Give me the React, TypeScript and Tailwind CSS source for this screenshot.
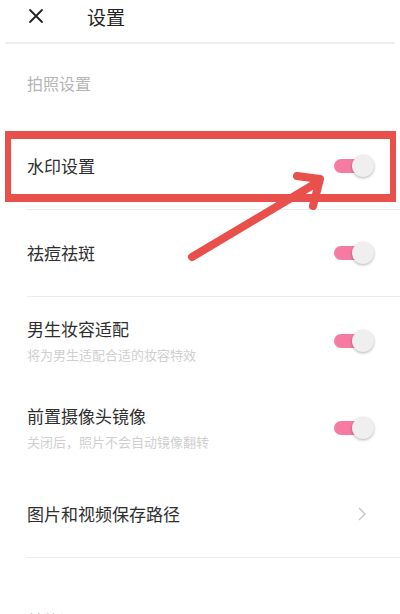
import React from "react";

const font = { fontFamily: '"Noto Sans CJK SC", "Noto Sans", sans-serif' };

function Toggle() {
  return (
    <div className="relative w-[40px] h-[24px] flex items-center">
      <div className="absolute left-0 w-[30px] h-[14px] rounded-full bg-[#f57ba2]" />
      <div className="absolute right-0 w-[22px] h-[22px] rounded-full bg-[#efefef] shadow-[0_1px_3px_rgba(0,0,0,0.3)]" />
    </div>
  );
}

function Row({ title, sub, right, border = true }: { title: string; sub?: string; right: React.ReactNode; border?: boolean }) {
  return (
    <div className={`ml-[27px] h-[87px] flex items-center justify-between pr-[26px] ${border ? "border-b border-[#ececec]" : ""}`}>
      <div className="flex flex-col">
        <div className="text-[17px] leading-[20px] text-[#2e2e2e]">{title}</div>
        {sub && <div className="mt-[9px] text-[13px] leading-[14px] text-[#cfcfcf]">{sub}</div>}
      </div>
      {right}
    </div>
  );
}

export default function App() {
  return (
    <div className="relative w-[400px] h-[614px] overflow-hidden bg-white" style={font}>
      <div className="h-[42px] flex items-center pb-[10px]">
        <svg className="ml-[28px]" width="16" height="16" viewBox="0 0 16 16">
          <path d="M2 2 L14 14 M14 2 L2 14" stroke="#222" strokeWidth="1.8" strokeLinecap="round" />
        </svg>
        <div className="ml-[43px] text-[19px] text-[#222] leading-none">设置</div>
      </div>
      <div className="mx-[5px] h-[2px] bg-[#eeeeee]" />
      <div className="h-[79px] flex items-center pl-[27px] pb-[2px]">
        <span className="text-[16px] text-[#b5b5b5]">拍照设置</span>
      </div>
      <Row title="水印设置" right={<Toggle />} />
      <Row title="祛痘祛斑" right={<Toggle />} />
      <Row title="男生妆容适配" sub="将为男生适配合适的妆容特效" right={<Toggle />} border={false} />
      <Row title="前置摄像头镜像" sub="关闭后，照片不会自动镜像翻转" right={<Toggle />} border={false} />
      <Row
        title="图片和视频保存路径"
        right={
          <svg className="mr-[8px]" width="8" height="16" viewBox="0 0 8 16">
            <path d="M1 2 L7 8 L1 14" fill="none" stroke="#c8c8c8" strokeWidth="1.5" />
          </svg>
        }
      />
      <div className="pl-[27px] pt-[52px] text-[16px] leading-[20px] text-[#b5b5b5]">其他设置</div>

      <div className="absolute left-[5px] top-[131px] w-[391px] h-[71px] border-x-[6px] border-y-[8px] border-[#e9504b]" />
      <svg className="absolute left-0 top-0" width="400" height="614" viewBox="0 0 400 614">
        <g stroke="#e9504b" strokeWidth="8" strokeLinecap="round" strokeLinejoin="round" fill="none">
          <path d="M192 257 L318 182" />
          <path d="M297 176 L320 179 L313 206" />
        </g>
      </svg>
    </div>
  );
}
